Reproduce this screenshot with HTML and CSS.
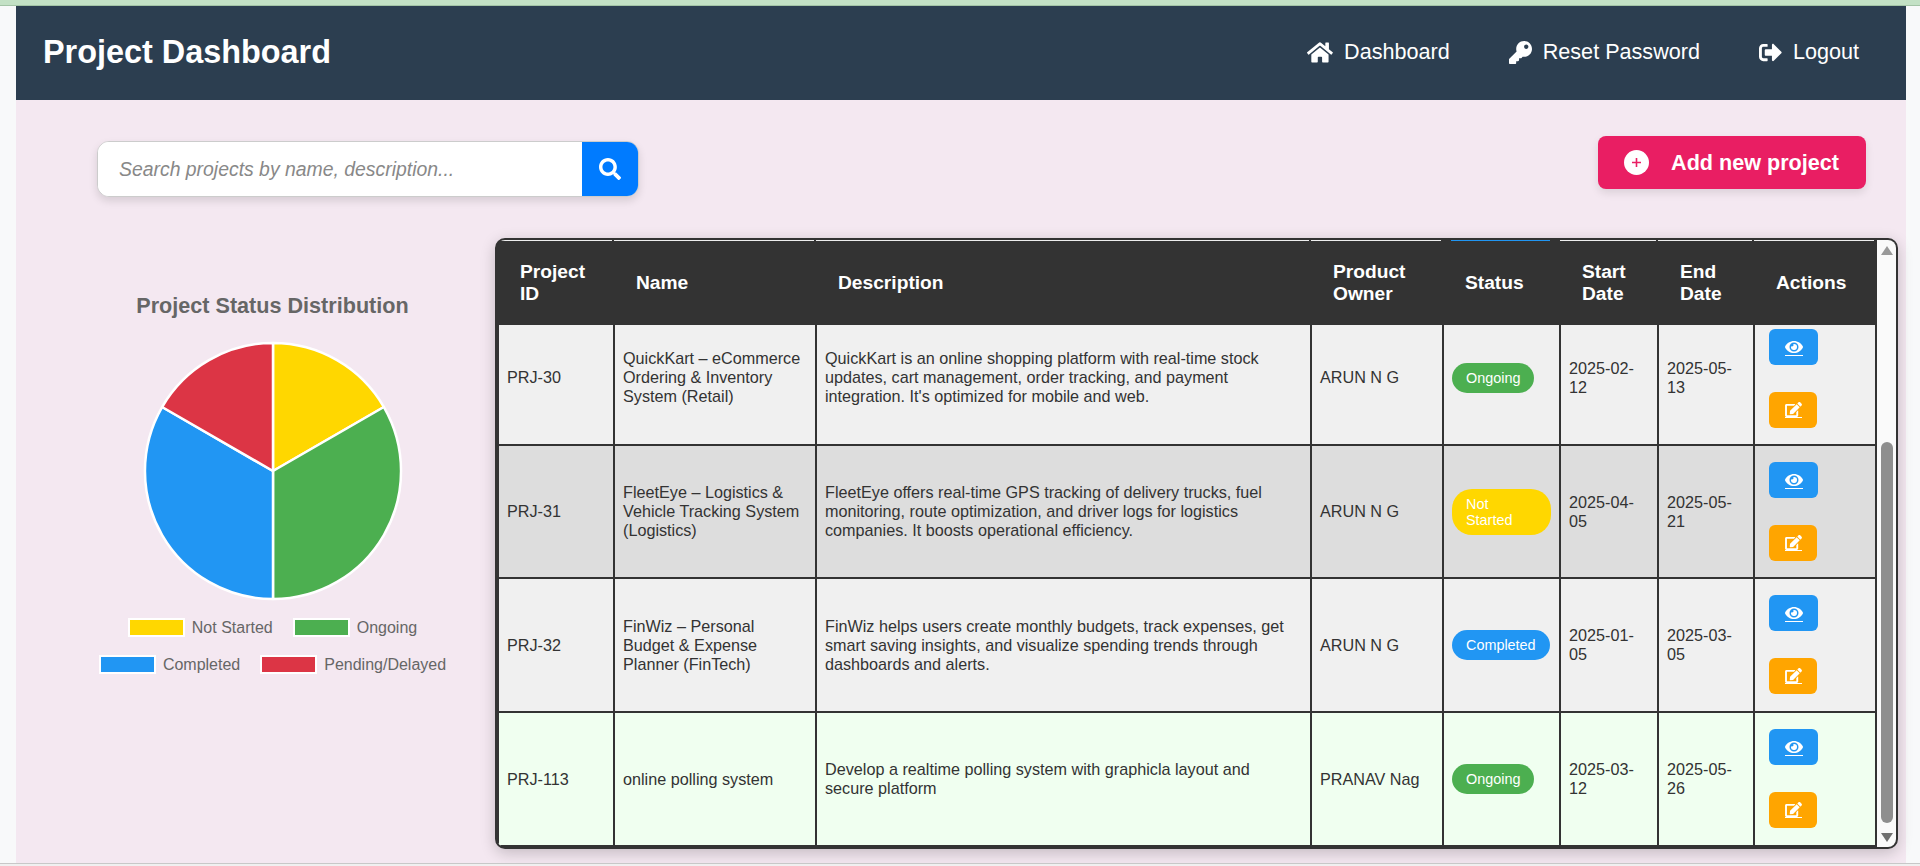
FILE: index.html
```html
<!DOCTYPE html>
<html lang="en">
<head>
    <meta charset="UTF-8">
    <meta name="viewport" content="width=device-width, initial-scale=1.0">
    <title>Project Dashboard</title>
    <link rel="stylesheet" href="styles.css">
</head>
<body>
    <div class="top-strip"></div>

    <div class="app">
        <header class="navbar">
            <h1>Project Dashboard</h1>
            <nav class="nav-links">
                <a href="#">
                    <svg class="nav-icon" viewBox="0 0 576 512"><path d="M280.37 148.26L96 300.11V464a16 16 0 0 0 16 16l112.06-.29a16 16 0 0 0 15.92-16V368a16 16 0 0 1 16-16h64a16 16 0 0 1 16 16v95.64a16 16 0 0 0 16 16.05L464 480a16 16 0 0 0 16-16V300L295.67 148.26a12.19 12.19 0 0 0-15.3 0zM571.6 251.47L488 182.56V44.05a12 12 0 0 0-12-12h-56a12 12 0 0 0-12 12v72.61L318.47 43a48 48 0 0 0-61 0L4.34 251.47a12 12 0 0 0-1.6 16.9l25.5 31A12 12 0 0 0 45.15 301l235.22-193.74a12.19 12.19 0 0 1 15.3 0L530.9 301a12 12 0 0 0 16.9-1.6l25.5-31a12 12 0 0 0-1.7-16.93z"/></svg>
                    Dashboard
                </a>
                <a href="#">
                    <svg class="nav-icon" viewBox="0 0 512 512"><path d="M512 176.001C512 273.203 433.202 352 336 352c-11.22 0-22.19-1.062-32.827-3.069l-24.012 27.014A23.999 23.999 0 0 1 261.223 384H224v40c0 13.255-10.745 24-24 24h-40v40c0 13.255-10.745 24-24 24H24c-13.255 0-24-10.745-24-24v-78.059c0-6.365 2.529-12.47 7.029-16.971l161.802-161.802C163.108 213.814 160 195.271 160 176 160 78.798 238.797.001 335.999 0 433.488-.001 512 78.511 512 176.001zM336 128c0 26.51 21.49 48 48 48s48-21.49 48-48-21.49-48-48-48-48 21.49-48 48z"/></svg>
                    Reset Password
                </a>
                <a href="#">
                    <svg class="nav-icon" viewBox="0 0 512 512"><path d="M497 273L329 441c-15 15-41 4.5-41-17v-96H152c-13.3 0-24-10.7-24-24v-96c0-13.3 10.7-24 24-24h136V88c0-21.4 25.9-32 41-17l168 168c9.3 9.4 9.3 24.6 0 34zM192 436v-40c0-6.6-5.4-12-12-12H96c-17.7 0-32-14.3-32-32V160c0-17.7 14.3-32 32-32h84c6.6 0 12-5.4 12-12V76c0-6.6-5.4-12-12-12H96c-53 0-96 43-96 96v192c0 53 43 96 96 96h84c6.6 0 12-5.4 12-12z"/></svg>
                    Logout
                </a>
            </nav>
        </header>

        <main class="content">
            <section class="toolbar">
                <form class="search-box">
                    <input type="text" placeholder="Search projects by name, description...">
                    <button type="button" class="search-btn">
                        <svg viewBox="0 0 512 512"><path d="M505 442.7L405.3 343c-4.5-4.5-10.6-7-17-7H372c27.6-35.3 44-79.7 44-128C416 93.1 322.9 0 208 0S0 93.1 0 208s93.1 208 208 208c48.3 0 92.7-16.4 128-44v16.3c0 6.4 2.5 12.5 7 17l99.7 99.7c9.4 9.4 24.6 9.4 33.9 0l28.3-28.3c9.4-9.4 9.4-24.6.1-34zM208 336c-70.7 0-128-57.2-128-128 0-70.7 57.2-128 128-128 70.7 0 128 57.2 128 128 0 70.7-57.2 128-128 128z"/></svg>
                    </button>
                </form>
                <a href="#" class="add-btn">
                    <svg class="add-icon" viewBox="0 0 25 25">
                        <circle cx="12.5" cy="12.5" r="12.5" fill="#fff"/>
                        <path d="M12.5 8v9M8 12.5h9" stroke="#e91e63" stroke-width="1.6"/>
                    </svg>
                    Add new project
                </a>
            </section>

            <section class="workspace">
                <div class="chart-panel">
                    <h2>Project Status Distribution</h2>
                    <svg class="pie" viewBox="-130 -130 260 260">
                        <g stroke="#fff" stroke-width="2.5" stroke-linejoin="round">
                            <path fill="#ffd700" d="M0 0L0 -128A128 128 0 0 1 110.9 -64Z"/>
                            <path fill="#4caf50" d="M0 0L110.9 -64A128 128 0 0 1 0 128Z"/>
                            <path fill="#2196f3" d="M0 0L0 128A128 128 0 0 1 -110.9 -64Z"/>
                            <path fill="#dc3545" d="M0 0L-110.9 -64A128 128 0 0 1 0 -128Z"/>
                        </g>
                    </svg>
                    <ul class="legend">
                        <li><span class="swatch swatch-yellow"></span>Not Started</li>
                        <li><span class="swatch swatch-green"></span>Ongoing</li>
                        <li><span class="swatch swatch-blue"></span>Completed</li>
                        <li><span class="swatch swatch-red"></span>Pending/Delayed</li>
                    </ul>
                </div>

                <div class="table-wrapper">
                    <div class="table-area">
                        <!-- row that has scrolled away under the sticky header -->
                        <div class="peek-strip">
                            <span></span><span></span><span></span><span></span>
                            <span class="peek-status"></span>
                            <span></span><span></span><span></span>
                        </div>
                        <table class="project-table">
                            <colgroup>
                                <col class="col-id">
                                <col class="col-name">
                                <col class="col-desc">
                                <col class="col-owner">
                                <col class="col-status">
                                <col class="col-start">
                                <col class="col-end">
                                <col class="col-actions">
                            </colgroup>
                            <thead>
                                <tr>
                                    <th>Project ID</th>
                                    <th>Name</th>
                                    <th>Description</th>
                                    <th>Product Owner</th>
                                    <th>Status</th>
                                    <th>Start Date</th>
                                    <th>End Date</th>
                                    <th>Actions</th>
                                </tr>
                            </thead>
                            <tbody>
                                <tr class="row-first row-light">
                                    <td>PRJ-30</td>
                                    <td>QuickKart – eCommerce Ordering &amp; Inventory System (Retail)</td>
                                    <td class="desc">QuickKart is an online shopping platform with real-time stock updates, cart management, order tracking, and payment integration. It's optimized for mobile and web.</td>
                                    <td>ARUN N G</td>
                                    <td><span class="status status-ongoing">Ongoing</span></td>
                                    <td>2025-02-12</td>
                                    <td>2025-05-13</td>
                                    <td class="actions">
                                        <div class="action-stack">
                                            <a href="#" class="action-btn btn-view"><span class="icon-line"><svg class="eye-icon" viewBox="0 0 576 512"><path d="M572.52 241.4C518.29 135.59 410.93 64 288 64S57.68 135.64 3.48 241.41a32.35 32.35 0 0 0 0 29.19C57.71 376.41 165.07 448 288 448s230.32-71.64 284.52-177.41a32.35 32.35 0 0 0 0-29.19zM288 400a144 144 0 1 1 144-144 143.93 143.93 0 0 1-144 144zm0-240a95.31 95.31 0 0 0-25.31 3.79 47.85 47.85 0 0 1-66.9 66.9A95.78 95.78 0 1 0 288 160z"/></svg></span></a>
                                            <a href="#" class="action-btn btn-edit"><span class="icon-line"><svg class="edit-icon" viewBox="0 0 576 512"><path d="M402.6 83.2l90.2 90.2c3.8 3.8 3.8 10 0 13.8L274.4 405.6l-92.8 10.3c-12.4 1.4-22.9-9.1-21.5-21.5l10.3-92.8L388.8 83.2c3.8-3.8 10-3.8 13.8 0zm162-22.9l-48.8-48.8c-15.2-15.2-39.9-15.2-55.2 0l-35.4 35.4c-3.8 3.8-3.8 10 0 13.8l90.2 90.2c3.8 3.8 10 3.8 13.8 0l35.4-35.4c15.2-15.3 15.2-40 0-55.2zM384 346.2V448H64V128h229.8c3.2 0 6.2-1.3 8.5-3.5l40-40c7.6-7.6 2.2-20.5-8.5-20.5H48C21.5 64 0 85.5 0 112v352c0 26.5 21.5 48 48 48h352c26.5 0 48-21.5 48-48V306.2c0-10.7-12.9-16-20.5-8.5l-40 40c-2.2 2.3-3.5 5.3-3.5 8.5z"/></svg></span></a>
                                        </div>
                                    </td>
                                </tr>
                                <tr class="row-grey">
                                    <td>PRJ-31</td>
                                    <td>FleetEye – Logistics &amp; Vehicle Tracking System (Logistics)</td>
                                    <td class="desc">FleetEye offers real-time GPS tracking of delivery trucks, fuel monitoring, route optimization, and driver logs for logistics companies. It boosts operational efficiency.</td>
                                    <td>ARUN N G</td>
                                    <td><span class="status status-not-started">Not Started</span></td>
                                    <td>2025-04-05</td>
                                    <td>2025-05-21</td>
                                    <td class="actions">
                                        <div class="action-stack">
                                            <a href="#" class="action-btn btn-view"><span class="icon-line"><svg class="eye-icon" viewBox="0 0 576 512"><path d="M572.52 241.4C518.29 135.59 410.93 64 288 64S57.68 135.64 3.48 241.41a32.35 32.35 0 0 0 0 29.19C57.71 376.41 165.07 448 288 448s230.32-71.64 284.52-177.41a32.35 32.35 0 0 0 0-29.19zM288 400a144 144 0 1 1 144-144 143.93 143.93 0 0 1-144 144zm0-240a95.31 95.31 0 0 0-25.31 3.79 47.85 47.85 0 0 1-66.9 66.9A95.78 95.78 0 1 0 288 160z"/></svg></span></a>
                                            <a href="#" class="action-btn btn-edit"><span class="icon-line"><svg class="edit-icon" viewBox="0 0 576 512"><path d="M402.6 83.2l90.2 90.2c3.8 3.8 3.8 10 0 13.8L274.4 405.6l-92.8 10.3c-12.4 1.4-22.9-9.1-21.5-21.5l10.3-92.8L388.8 83.2c3.8-3.8 10-3.8 13.8 0zm162-22.9l-48.8-48.8c-15.2-15.2-39.9-15.2-55.2 0l-35.4 35.4c-3.8 3.8-3.8 10 0 13.8l90.2 90.2c3.8 3.8 10 3.8 13.8 0l35.4-35.4c15.2-15.3 15.2-40 0-55.2zM384 346.2V448H64V128h229.8c3.2 0 6.2-1.3 8.5-3.5l40-40c7.6-7.6 2.2-20.5-8.5-20.5H48C21.5 64 0 85.5 0 112v352c0 26.5 21.5 48 48 48h352c26.5 0 48-21.5 48-48V306.2c0-10.7-12.9-16-20.5-8.5l-40 40c-2.2 2.3-3.5 5.3-3.5 8.5z"/></svg></span></a>
                                        </div>
                                    </td>
                                </tr>
                                <tr class="row-light row-tall">
                                    <td>PRJ-32</td>
                                    <td>FinWiz – Personal Budget &amp; Expense Planner (FinTech)</td>
                                    <td class="desc">FinWiz helps users create monthly budgets, track expenses, get smart saving insights, and visualize spending trends through dashboards and alerts.</td>
                                    <td>ARUN N G</td>
                                    <td><span class="status status-completed">Completed</span></td>
                                    <td>2025-01-05</td>
                                    <td>2025-03-05</td>
                                    <td class="actions">
                                        <div class="action-stack">
                                            <a href="#" class="action-btn btn-view"><span class="icon-line"><svg class="eye-icon" viewBox="0 0 576 512"><path d="M572.52 241.4C518.29 135.59 410.93 64 288 64S57.68 135.64 3.48 241.41a32.35 32.35 0 0 0 0 29.19C57.71 376.41 165.07 448 288 448s230.32-71.64 284.52-177.41a32.35 32.35 0 0 0 0-29.19zM288 400a144 144 0 1 1 144-144 143.93 143.93 0 0 1-144 144zm0-240a95.31 95.31 0 0 0-25.31 3.79 47.85 47.85 0 0 1-66.9 66.9A95.78 95.78 0 1 0 288 160z"/></svg></span></a>
                                            <a href="#" class="action-btn btn-edit"><span class="icon-line"><svg class="edit-icon" viewBox="0 0 576 512"><path d="M402.6 83.2l90.2 90.2c3.8 3.8 3.8 10 0 13.8L274.4 405.6l-92.8 10.3c-12.4 1.4-22.9-9.1-21.5-21.5l10.3-92.8L388.8 83.2c3.8-3.8 10-3.8 13.8 0zm162-22.9l-48.8-48.8c-15.2-15.2-39.9-15.2-55.2 0l-35.4 35.4c-3.8 3.8-3.8 10 0 13.8l90.2 90.2c3.8 3.8 10 3.8 13.8 0l35.4-35.4c15.2-15.3 15.2-40 0-55.2zM384 346.2V448H64V128h229.8c3.2 0 6.2-1.3 8.5-3.5l40-40c7.6-7.6 2.2-20.5-8.5-20.5H48C21.5 64 0 85.5 0 112v352c0 26.5 21.5 48 48 48h352c26.5 0 48-21.5 48-48V306.2c0-10.7-12.9-16-20.5-8.5l-40 40c-2.2 2.3-3.5 5.3-3.5 8.5z"/></svg></span></a>
                                        </div>
                                    </td>
                                </tr>
                                <tr class="row-green row-tall">
                                    <td>PRJ-113</td>
                                    <td>online polling system</td>
                                    <td class="desc">Develop a realtime polling system with graphicla layout and secure platform</td>
                                    <td>PRANAV Nag</td>
                                    <td><span class="status status-ongoing">Ongoing</span></td>
                                    <td>2025-03-12</td>
                                    <td>2025-05-26</td>
                                    <td class="actions">
                                        <div class="action-stack">
                                            <a href="#" class="action-btn btn-view"><span class="icon-line"><svg class="eye-icon" viewBox="0 0 576 512"><path d="M572.52 241.4C518.29 135.59 410.93 64 288 64S57.68 135.64 3.48 241.41a32.35 32.35 0 0 0 0 29.19C57.71 376.41 165.07 448 288 448s230.32-71.64 284.52-177.41a32.35 32.35 0 0 0 0-29.19zM288 400a144 144 0 1 1 144-144 143.93 143.93 0 0 1-144 144zm0-240a95.31 95.31 0 0 0-25.31 3.79 47.85 47.85 0 0 1-66.9 66.9A95.78 95.78 0 1 0 288 160z"/></svg></span></a>
                                            <a href="#" class="action-btn btn-edit"><span class="icon-line"><svg class="edit-icon" viewBox="0 0 576 512"><path d="M402.6 83.2l90.2 90.2c3.8 3.8 3.8 10 0 13.8L274.4 405.6l-92.8 10.3c-12.4 1.4-22.9-9.1-21.5-21.5l10.3-92.8L388.8 83.2c3.8-3.8 10-3.8 13.8 0zm162-22.9l-48.8-48.8c-15.2-15.2-39.9-15.2-55.2 0l-35.4 35.4c-3.8 3.8-3.8 10 0 13.8l90.2 90.2c3.8 3.8 10 3.8 13.8 0l35.4-35.4c15.2-15.3 15.2-40 0-55.2zM384 346.2V448H64V128h229.8c3.2 0 6.2-1.3 8.5-3.5l40-40c7.6-7.6 2.2-20.5-8.5-20.5H48C21.5 64 0 85.5 0 112v352c0 26.5 21.5 48 48 48h352c26.5 0 48-21.5 48-48V306.2c0-10.7-12.9-16-20.5-8.5l-40 40c-2.2 2.3-3.5 5.3-3.5 8.5z"/></svg></span></a>
                                        </div>
                                    </td>
                                </tr>
                            </tbody>
                        </table>
                    </div>
                    <div class="scrollbar">
                        <svg class="arrow" viewBox="0 0 12 9"><path fill="#999" d="M6 0L12 9H0Z"/></svg>
                        <div class="scroll-track"><div class="scroll-thumb"></div></div>
                        <svg class="arrow" viewBox="0 0 12 9"><path fill="#707070" d="M0 0H12L6 9Z"/></svg>
                    </div>
                </div>
            </section>
        </main>
    </div>

    <div class="bottom-strip"></div>
</body>
</html>
```

FILE: styles.css
```css
* {
    box-sizing: border-box;
}
html, body {
    height: 100%;
}
body {
    font-family: "Liberation Sans", Arial, sans-serif;
    margin: 0;
    padding: 0;
    background-color: #f8f9fa;
    color: #333;
    overflow: hidden;
    display: flex;
    flex-direction: column;
}
.top-strip {
    height: 6px;
    background-color: #c3e1c5;
    border-bottom: 1px solid #a3c4a6;
}
.bottom-strip {
    height: 3px;
    background-color: #f0f0f0;
    border-top: 1px solid #c8c8c8;
}
.app {
    flex: 1;
    min-height: 0;
    display: flex;
    flex-direction: column;
    margin: 0 14px 0 16px;
}

/* navbar */
.navbar {
    height: 94px;
    flex-shrink: 0;
    padding: 0 47px 2px 27px;
    background-color: #2c3e50;
    color: #fff;
    display: flex;
    justify-content: space-between;
    align-items: center;
}
.navbar h1 {
    margin: 0;
    font-size: 32.4px;
    font-weight: bold;
}
.nav-links {
    display: flex;
    gap: 59px;
}
.nav-links a {
    display: flex;
    align-items: center;
    gap: 11px;
    color: #fff;
    text-decoration: none;
    font-size: 21.6px;
}
.nav-icon {
    height: 23px;
    fill: #fff;
}

/* search + add */
.content {
    flex: 1;
    min-height: 0;
    background-color: #f4e8f1;
}
.toolbar {
    display: flex;
    justify-content: space-between;
    align-items: flex-start;
    padding: 36px 40px 41px 81px;
}
.search-box {
    display: flex;
    width: 542px;
    height: 56px;
    margin-top: 5px;
    border: 1px solid #ccc;
    border-radius: 12px;
    overflow: hidden;
    background-color: #fff;
    box-shadow: 0 4px 8px rgba(0, 0, 0, 0.12);
}
.search-box input {
    flex: 1;
    min-width: 0;
    border: none;
    outline: none;
    padding: 0 21px;
    font-family: inherit;
    font-size: 19.4px;
    font-style: italic;
}
.search-box input::placeholder {
    color: #888;
}
.search-btn {
    width: 56px;
    border: none;
    background-color: #007bff;
    display: flex;
    align-items: center;
    justify-content: center;
    padding: 0;
}
.search-btn svg {
    width: 22px;
    height: 22px;
    fill: #fff;
}
.add-btn {
    display: flex;
    align-items: center;
    gap: 22px;
    height: 53px;
    padding: 0 27px 0 26px;
    border-radius: 8px;
    background-color: #e91e63;
    color: #fff;
    font-size: 21.6px;
    font-weight: bold;
    text-decoration: none;
    box-shadow: 0 4px 8px rgba(0, 0, 0, 0.1);
}
.add-icon {
    width: 25px;
    height: 25px;
}

/* layout below the toolbar */
.workspace {
    display: flex;
    gap: 32px;
    padding: 0 8px 0 66px;
}

/* pie chart */
.chart-panel {
    width: 381px;
    flex-shrink: 0;
    padding-top: 56px;
    text-align: center;
    color: #666;
}
.chart-panel h2 {
    margin: 0 0 23px;
    font-size: 21.6px;
    line-height: 24px;
    font-weight: bold;
}
.pie {
    display: block;
    width: 260px;
    height: 260px;
    margin: 0 auto 17px;
}
.legend {
    list-style: none;
    margin: 0;
    padding: 0;
    display: flex;
    flex-wrap: wrap;
    justify-content: center;
    column-gap: 20px;
    row-gap: 18px;
    font-size: 16px;
}
.legend li {
    display: flex;
    align-items: center;
    gap: 7px;
    height: 19px;
}
.swatch {
    display: block;
    width: 57px;
    height: 19px;
    border: 2.5px solid #fff;
}
.swatch-yellow { background-color: #ffd700; }
.swatch-green { background-color: #4caf50; }
.swatch-blue { background-color: #2196f3; }
.swatch-red { background-color: #dc3545; }

/* table */
.table-wrapper {
    display: flex;
    align-items: stretch;
    width: 1403px;
    border: 2px solid #333;
    border-radius: 10px;
    overflow: hidden;
    background-color: #333;
    box-shadow: 0 4px 15px rgba(0, 0, 0, 0.2);
}
.table-area {
    width: 1380px;
    flex-shrink: 0;
}
.peek-strip {
    display: grid;
    grid-template-columns: 116px 202px 495px 132px 117px 98px 96px 122px;
    height: 1px;
    padding-left: 1px;
}
.peek-strip span {
    margin-right: 2px;
    background-color: #eee;
}
.peek-strip .peek-status {
    margin-left: 8px;
    margin-right: 10px;
    background-color: #2196f3;
}
.project-table {
    width: 1380px;
    table-layout: fixed;
    border-collapse: collapse;
    font-size: 16.2px;
}
.col-id { width: 116px; }
.col-name { width: 202px; }
.col-desc { width: 495px; }
.col-owner { width: 132px; }
.col-status { width: 117px; }
.col-start { width: 98px; }
.col-end { width: 96px; }
.col-actions { width: 122px; }
.project-table th,
.project-table td {
    border: 2px solid #333;
    text-align: left;
}
.project-table th {
    height: 82px;
    padding: 0 20px 0 21px;
    background-color: #333;
    color: #fff;
    font-size: 19.2px;
    font-weight: bold;
}
.project-table td {
    padding: 0 8px;
    vertical-align: middle;
}
.project-table td.desc {
    padding-right: 16px;
}
.row-light td { background-color: #f0f0f0; }
.row-grey td { background-color: #ddd; }
.row-green td { background-color: #f0fff0; }
.row-first td,
.project-table .row-first td.desc {
    padding-bottom: 14px;
}
.project-table td.actions {
    padding: 16px 12px 16px 14px;
}
.project-table .row-first td.actions {
    padding-top: 4px;
    padding-bottom: 16px;
}
.project-table .row-tall td.actions {
    padding-bottom: 17px;
}
.action-stack {
    display: flex;
    flex-direction: column;
    align-items: flex-start;
    gap: 27px;
}
.action-btn {
    display: flex;
    align-items: center;
    justify-content: center;
    height: 36px;
    padding: 0 15.5px;
    border-radius: 6px;
    color: #fff;
}
.btn-view { background-color: #2196f3; }
.btn-edit { background-color: #ffa500; }
.icon-line {
    display: block;
    line-height: 0;
    border-bottom: 1px solid #fff;
}
.eye-icon {
    display: block;
    width: 18px;
    height: 16px;
    fill: #fff;
}
.edit-icon {
    display: block;
    width: 17px;
    height: 15px;
    fill: #fff;
}
.status {
    display: inline-block;
    padding: 7px 14px;
    border-radius: 20px;
    color: #fff;
    font-size: 14.4px;
    line-height: 16px;
}
.status-ongoing { background-color: #4caf50; }
.status-not-started { background-color: #ffd700; }
.status-completed { background-color: #2196f3; }

/* scrollbar */
.scrollbar {
    width: 19px;
    background-color: #fafafa;
    display: flex;
    flex-direction: column;
    align-items: center;
    padding: 6px 0 5px;
}
.arrow {
    display: block;
    flex-shrink: 0;
    width: 12px;
    height: 9px;
}
.scroll-track {
    flex: 1;
    width: 12px;
    display: flex;
    flex-direction: column;
    justify-content: flex-end;
    padding-bottom: 10px;
}
.scroll-thumb {
    height: 381px;
    border-radius: 6px;
    background-color: #8e8e8e;
}
```
